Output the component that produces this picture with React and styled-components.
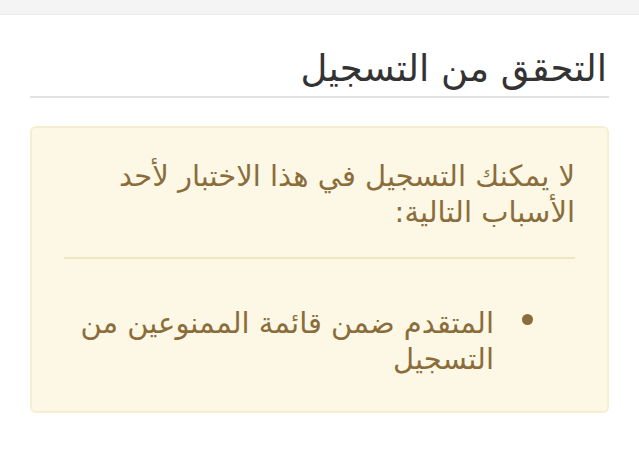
import React from "react";
import styled, { createGlobalStyle } from "styled-components";

const GlobalStyle = createGlobalStyle`
  html, body {
    margin: 0;
    padding: 0;
    background: #ffffff;
  }
  body {
    font-family: "DejaVu Sans", "Noto Sans", sans-serif;
  }
`;

const TopBar = styled.div`
  height: 14px;
  background: #f4f4f4;
  border-bottom: 1px solid #ececec;
`;

const Page = styled.div`
  direction: rtl;
  padding: 0 30px;
`;

const Title = styled.h1`
  margin: 31px 0 0;
  padding: 0 2px 4px 0;
  font-size: 37px;
  font-weight: 400;
  line-height: 46px;
  color: #333333;
  border-bottom: 2px solid #e2e2e2;
`;

const Alert = styled.div`
  margin-top: 28px;
  padding: 30px 32px 34px;
  background: #fcf8e5;
  border: 2px solid #f7eed0;
  border-radius: 6px;
  color: #8a6d3b;
  font-size: 29px;
  line-height: 36px;
`;

const Lead = styled.p`
  margin: 0;
`;

const Divider = styled.hr`
  margin: 27px 0 46px;
  border: 0;
  border-top: 2px solid #f1e6c0;
`;

const Reasons = styled.ul`
  margin: 0;
  padding: 0 42px 0 0;
  list-style: none;
`;

const Reason = styled.li`
  display: flex;
  align-items: flex-start;
  gap: 28px;
`;

const Dot = styled.span`
  flex: none;
  width: 11px;
  height: 11px;
  margin-top: 9px;
  border-radius: 50%;
  background: #8a6d3b;
`;

export default function App() {
  return (
    <>
      <GlobalStyle />
      <TopBar />
      <Page>
        <Title>التحقق من التسجيل</Title>
        <Alert>
          <Lead>لا يمكنك التسجيل في هذا الاختبار لأحد الأسباب التالية:</Lead>
          <Divider />
          <Reasons>
            <Reason>
              <Dot />
              <span>المتقدم ضمن قائمة الممنوعين من التسجيل</span>
            </Reason>
          </Reasons>
        </Alert>
      </Page>
    </>
  );
}
